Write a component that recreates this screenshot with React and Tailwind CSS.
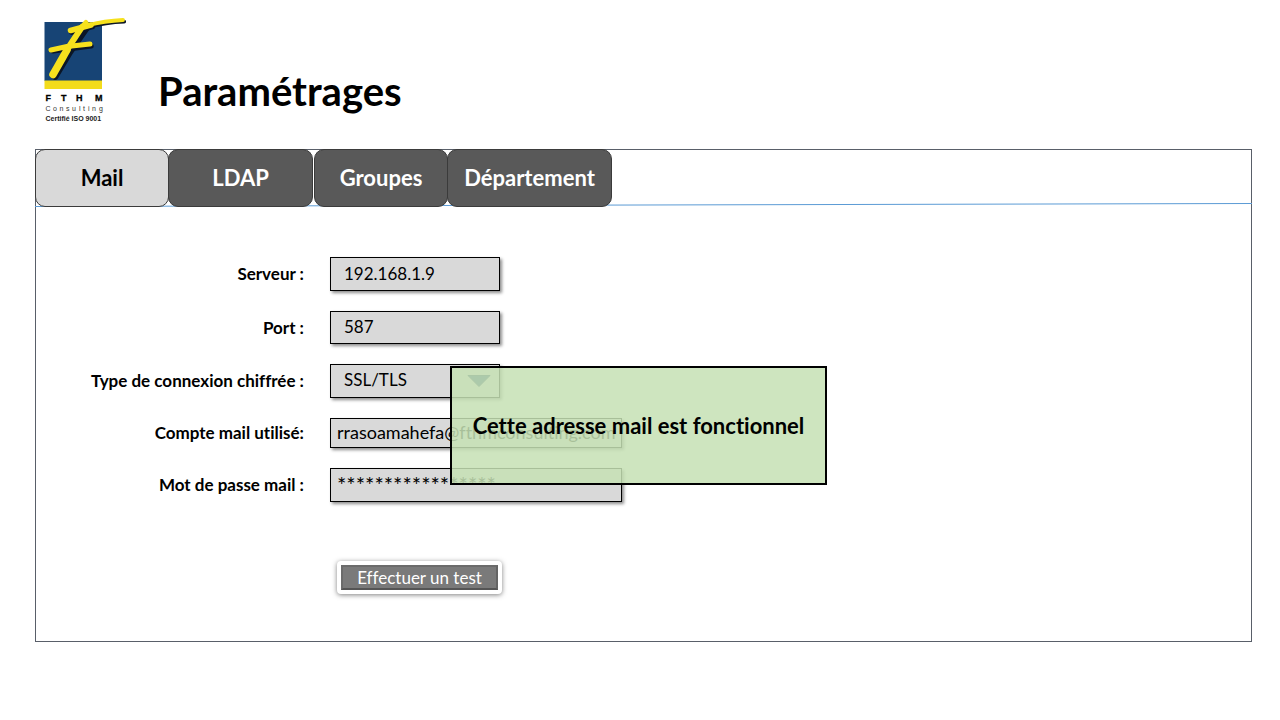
import React from "react";

const tabs = [
  { name: "Mail", look: "w-[134px] bg-[#d9d9d9] text-black" },
  { name: "LDAP", look: "-ml-px w-[145px] bg-[#595959] text-white" },
  { name: "Groupes", look: "ml-px w-[134px] bg-[#595959] text-white" },
  { name: "Département", look: "-ml-px w-[165px] bg-[#595959] text-white" },
];

const field =
  "block border border-black bg-[#d9d9d9] pb-0.5 text-black shadow-[2px_2px_3px_rgba(0,0,0,0.45)] outline-none rounded-none";

function Logo() {
  return (
    <svg viewBox="0 0 95 110" className="h-[110px] w-[95px] shrink-0" role="img" aria-label="FTHM Consulting">
      <rect x="9.5" y="6" width="57.5" height="59" fill="#174475" />
      <rect x="9.5" y="64.5" width="57.5" height="8.5" fill="#f3dc1c" />
      <g fill="none" strokeLinecap="round" strokeLinejoin="round">
        <g stroke="#0b1626" transform="translate(1.2 1.6)">
          <path d="M35.500 14.500L56 9" strokeWidth="5.500" />
          <path d="M52 9.500C65 6 76 4.500 88 4" strokeWidth="3.800" />
          <path d="M52 8L34 34L19 59" strokeWidth="6.500" />
          <path d="M17 33.500L55 28.500" strokeWidth="5" />
        </g>
        <g stroke="#f6e11d">
          <path d="M35.500 14.500L56 9" strokeWidth="5.500" />
          <path d="M52 9.500C65 6 76 4.500 88 4" strokeWidth="3.800" />
          <path d="M51 6.500L47 11" strokeWidth="5" />
          <path d="M47 11C42 19 36 27 32 34" strokeWidth="6" />
          <path d="M32 34C28 41 23 50 18 58.500" strokeWidth="7.500" />
          <path d="M16 34L32 30.500L55 28" strokeWidth="5" />
        </g>
      </g>
      <g fontFamily="Liberation Sans, sans-serif">
        <text y="85" fontSize="9" fontWeight="700" stroke="#000" strokeWidth="0.300" x="10.500 26 41 60">FTHM</text>
        <text y="95" fontSize="7" fill="#333" x="10.500 18 24.500 31 37 44 48 53 57 64">Consulting</text>
        <text x="10.500" y="105" fontSize="7" fontWeight="700" fill="#222">Certifié ISO 9001</text>
      </g>
    </svg>
  );
}

function Row({ id, label, children }) {
  return (
    <>
      <label htmlFor={id} className="text-right text-[17px] leading-6 font-bold whitespace-nowrap">
        {label}
      </label>
      {children}
    </>
  );
}

export default function App() {
  return (
    <div className="pt-4 pr-7 pb-10 pl-[35px] font-['Lato','Liberation_Sans',sans-serif] text-black [font-variant-ligatures:none]">
      <header className="flex items-center gap-7">
        <Logo />
        <h1 className="pt-10 text-[40px] leading-[48px] font-bold">Paramétrages</h1>
      </header>

      <main className="mt-[23px] border border-[#595f69] pb-[47px]">
        <nav className="relative -mx-px -mt-px flex" aria-label="Paramétrages">
          <svg className="absolute inset-x-0 bottom-0 h-1 w-full" viewBox="0 0 100 4" preserveAspectRatio="none" aria-hidden="true">
            <line x1="0" y1="3.5" x2="100" y2="0.5" stroke="#5b9bd5" vectorEffect="non-scaling-stroke" />
          </svg>
          {tabs.map((tab) => (
            <button
              key={tab.name}
              type="button"
              className={`relative h-[58px] rounded-[10px] border border-[#3b3b3b] pb-0.5 text-[22px] font-bold ${tab.look}`}
            >
              {tab.name}
            </button>
          ))}
        </nav>

        <form className="relative mt-[50px]">
          <div className="grid grid-cols-[268px_1fr] items-center gap-x-[26px] gap-y-5">
            <Row id="server" label="Serveur :">
              <input id="server" className={`${field} h-[34px] w-[170px] px-[13px] text-[17px]`} defaultValue="192.168.1.9" />
            </Row>
            <Row id="port" label="Port :">
              <input id="port" className={`${field} h-[33px] w-[170px] px-[13px] text-[17px]`} defaultValue="587" />
            </Row>
            <Row id="secure" label="Type de connexion chiffrée :">
              <div className="relative w-[170px]">
                <select id="secure" className={`${field} h-[34px] w-full appearance-none px-[13px] text-[17px]`}>
                  <option>SSL/TLS</option>
                </select>
                <svg className="pointer-events-none absolute top-[11px] right-[9px] h-3 w-6" viewBox="0 0 24 12" aria-hidden="true">
                  <path d="M1 0.5H23L12 11.5Z" fill="#1f4e79" stroke="#1f3f5c" />
                </svg>
              </div>
            </Row>
            <Row id="account" label="Compte mail utilisé:">
              <input id="account" className={`${field} h-[30px] w-[292px] px-1.5 text-lg`} defaultValue="rrasoamahefa@fthmconsulting.com" />
            </Row>
            <Row id="password" label="Mot de passe mail :">
              <input id="password" className={`${field} h-[34px] w-[292px] px-1.5 text-[22px]`} defaultValue="*****************" />
            </Row>
          </div>

          <button
            type="button"
            className="mt-[59px] ml-[301px] h-[33px] w-[165px] rounded-sm border-4 border-white bg-[#7a7a7a] text-[17px] text-white shadow-[0_1px_5px_rgba(0,0,0,0.5)]"
          >
            <span className="flex h-full items-center justify-center border-2 border-t-[#6b6b6b] border-r-[#646464] border-b-[#555] border-l-[#6b6b6b]">
              Effectuer un test
            </span>
          </button>

          <div
            role="status"
            className="absolute top-[109px] left-[414px] flex h-[119px] w-[377px] items-center justify-center border-2 border-black bg-[#c5e0b4]/85 text-[22px] font-bold whitespace-nowrap"
          >
            Cette adresse mail est fonctionnel
          </div>
        </form>
      </main>
    </div>
  );
}
